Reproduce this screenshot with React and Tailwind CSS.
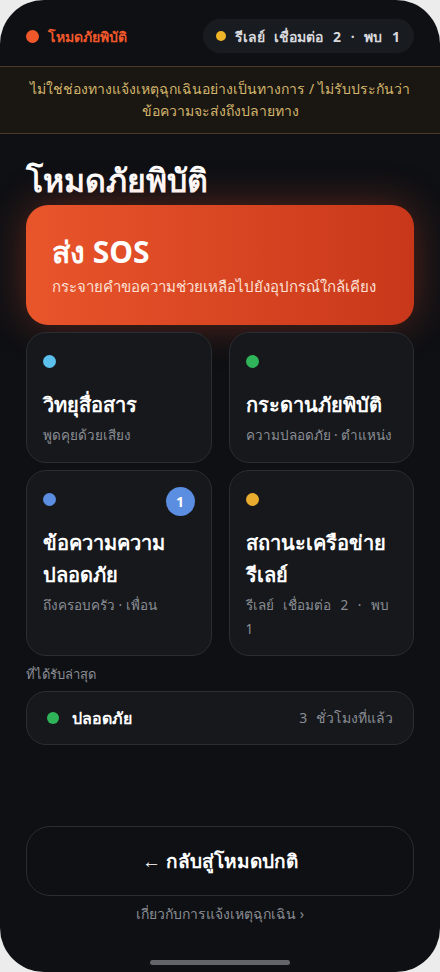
import React from 'react';

const tiles = [
  { dot: 'bg-[#5bc0eb]', title: 'วิทยุสื่อสาร', sub: 'พูดคุยด้วยเสียง' },
  { dot: 'bg-[#2fb45a]', title: 'กระดานภัยพิบัติ', sub: 'ความปลอดภัย · ตำแหน่ง' },
  { dot: 'bg-[#5b8de0]', title: 'ข้อความความปลอดภัย', sub: 'ถึงครอบครัว · เพื่อน', badge: 1 },
  { dot: 'bg-[#e9ac2f]', title: 'สถานะเครือข่ายรีเลย์', sub: 'รีเลย์ เชื่อมต่อ 2 · พบ 1', wide: true },
];

function App() {
  return (
    <div className="min-h-screen bg-[#ececec] font-['Noto_Sans',sans-serif]">
      <div className="w-[440px] h-[972px] bg-[#0e1014] rounded-[44px] overflow-hidden flex flex-col">
        {/* status row */}
        <div className="flex items-center justify-between px-[26px] pt-[19px]">
          <div className="flex items-center gap-[9px]">
            <span className="w-[13px] h-[13px] rounded-full bg-[#f0572a]" />
            <span className="text-[14px] font-bold text-[#f0572a]">โหมดภัยพิบัติ</span>
          </div>
          <div className="flex items-center gap-[9px] h-[34px] pl-[13px] pr-[14px] rounded-full bg-[#181b20]">
            <span className="w-[10px] h-[10px] rounded-full bg-[#f0b429]" />
            <span className="text-[14px] font-bold text-[#d8d9dc] [word-spacing:6px]">รีเลย์ เชื่อมต่อ 2 · พบ 1</span>
          </div>
        </div>

        {/* warning banner */}
        <div className="mt-[13px] h-[68px] flex items-center justify-center border-y border-[#4a3b24] bg-[#1a1712] px-4">
          <p className="text-center text-[14px] leading-[22px] text-[#d4b56c]">
            ไม่ใช่ช่องทางแจ้งเหตุฉุกเฉินอย่างเป็นทางการ / ไม่รับประกันว่า<br />ข้อความจะส่งถึงปลายทาง
          </p>
        </div>

        <div className="px-[26px] flex flex-col flex-1">
          <h1 className="mt-[26px] text-[32px] leading-[40px] font-bold text-white">โหมดภัยพิบัติ</h1>

          {/* SOS */}
          <button className="mt-[5px] h-[120px] rounded-[22px] bg-gradient-to-r from-[#e9552b] to-[#c8371a] shadow-[0_0_40px_rgba(232,80,40,0.35)] text-left px-[26px] flex flex-col justify-center">
            <span className="text-[30px] leading-[38px] font-bold text-white">ส่ง SOS</span>
            <span className="mt-[4px] text-[15px] text-[#fde1d6]">กระจายคำขอความช่วยเหลือไปยังอุปกรณ์ใกล้เคียง</span>
          </button>

          {/* tiles */}
          <div className="mt-[7px] grid grid-cols-2 gap-x-[17px] gap-y-[7px]">
            {tiles.map((t, i) => (
              <div
                key={t.title}
                className={`relative rounded-[20px] bg-[#16181c] border border-[#2a2d33] px-[16px] pt-[22px] ${i < 2 ? 'h-[131px]' : 'h-[186px]'}`}
              >
                <span className={`block w-[13px] h-[13px] rounded-full ${t.dot}`} />
                {t.badge && (
                  <span className="absolute top-[16px] right-[16px] w-[29px] h-[29px] rounded-full bg-[#5b8de0] text-white text-[14px] font-bold flex items-center justify-center">
                    {t.badge}
                  </span>
                )}
                <div className="mt-[21px] text-[20px] leading-[32px] font-bold text-white">{t.title}</div>
                <div className={`mt-[2px] text-[13.5px] leading-[24px] text-[#8a8d93] ${t.wide ? '[word-spacing:6px]' : ''}`}>{t.sub}</div>
              </div>
            ))}
          </div>

          <div className="mt-[9px] text-[13px] text-[#8a8d93]">ที่ได้รับล่าสุด</div>
          <div className="mt-[6px] h-[54px] rounded-[20px] bg-[#16181c] border border-[#2a2d33] flex items-center px-[20px]">
            <span className="w-[12px] h-[12px] rounded-full bg-[#2fb45a]" />
            <span className="ml-[13px] text-[16px] font-bold text-white">ปลอดภัย</span>
            <span className="ml-auto text-[14px] text-[#8a8d93] [word-spacing:5px]">3 ชั่วโมงที่แล้ว</span>
          </div>

          <div className="mt-auto" />
          <button className="h-[70px] rounded-[24px] border border-[#2a2d33] bg-[#0e1014] text-[19px] font-bold text-white">
            ← กลับสู่โหมดปกติ
          </button>
          <div className="mt-[7px] text-center text-[14px] text-[#8a8d93]">เกี่ยวกับการแจ้งเหตุฉุกเฉิน ›</div>
          <div className="mt-[36px] mb-[7px] mx-auto w-[140px] h-[5px] rounded-full bg-[#626469]" />
        </div>
      </div>
    </div>
  );
}

export default App;
